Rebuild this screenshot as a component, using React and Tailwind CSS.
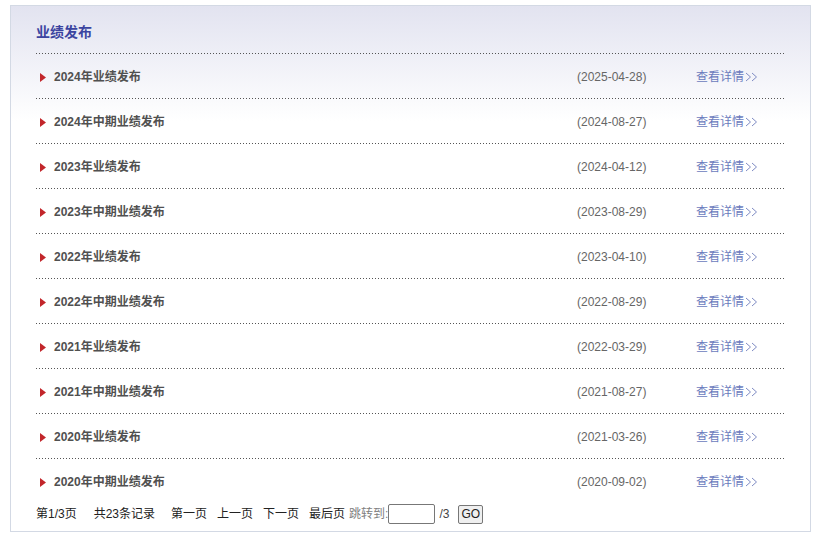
import React from "react";

const rows = [
  ["2024年业绩发布", "(2025-04-28)"],
  ["2024年中期业绩发布", "(2024-08-27)"],
  ["2023年业绩发布", "(2024-04-12)"],
  ["2023年中期业绩发布", "(2023-08-29)"],
  ["2022年业绩发布", "(2023-04-10)"],
  ["2022年中期业绩发布", "(2022-08-29)"],
  ["2021年业绩发布", "(2022-03-29)"],
  ["2021年中期业绩发布", "(2021-08-27)"],
  ["2020年业绩发布", "(2021-03-26)"],
  ["2020年中期业绩发布", "(2020-09-02)"],
];

function Chevrons() {
  return (
    <svg width="14" height="10" viewBox="0 0 14 10" className="ml-[1px]" fill="none" stroke="#7f8cc4" strokeWidth="1">
      <path d="M1 1 L5.5 5 L1 9" />
      <path d="M7 1 L11.5 5 L7 9" />
    </svg>
  );
}

function Dots() {
  return <div className="h-[1px] bg-[linear-gradient(to_right,#555_1px,transparent_1px)] bg-[length:3px_1px] bg-repeat-x" />;
}

export default function App() {
  return (
    <div className="w-[819px] h-[535px] bg-white pt-[5px] pl-[10px]" style={{ fontFamily: '"Liberation Sans", "Noto Sans CJK SC", sans-serif' }}>
      <div className="w-[801px] h-[527px] border border-[#d3d9e4] bg-[linear-gradient(to_bottom,#e2e3f0,#ffffff_115px)] pl-[25px] pr-[26px]">
        <div className="h-[47px] flex items-end pb-[14px]">
          <span className="text-[14px] font-bold text-[#3b44a0] leading-none">业绩发布</span>
        </div>
        <Dots />
        {rows.map(([name, date], i) => (
          <div key={i}>
            <div className="h-[44px] flex items-center text-[12px] pt-[2px]">
              <div className="w-[541px] flex items-center pl-[4px]">
                <svg width="6" height="9" viewBox="0 0 6 9" className="mr-[8px]">
                  <path d="M0 0 L6 4.5 L0 9 Z" fill="#c2262b" />
                </svg>
                <span className="font-bold text-[#505050]">{name}</span>
              </div>
              <div className="w-[119px] text-[#666]">{date}</div>
              <div className="flex items-center text-[#6b7bbd]">
                <span>查看详情</span>
                <Chevrons />
              </div>
            </div>
            {i < rows.length - 1 && <Dots />}
          </div>
        ))}
        <div className="h-[22px] flex items-center text-[12px] text-[#222]">
          <span>第1/3页</span>
          <span className="ml-[17px]">共23条记录</span>
          <span className="ml-[16px]">第一页</span>
          <span className="ml-[10px]">上一页</span>
          <span className="ml-[10px]">下一页</span>
          <span className="ml-[10px]">最后页</span>
          <span className="ml-[4px] text-[#808080]">跳转到:</span>
          <input className="w-[47px] h-[20px] border border-[#777] rounded-[2px] bg-white outline-none" />
          <span className="ml-[4px] text-[#444]">/3</span>
          <button className="ml-[9px] h-[19px] px-[2px] border border-[#777] rounded-[2px] bg-[#efefef] text-[12px] text-[#222] leading-none">GO</button>
        </div>
      </div>
    </div>
  );
}
